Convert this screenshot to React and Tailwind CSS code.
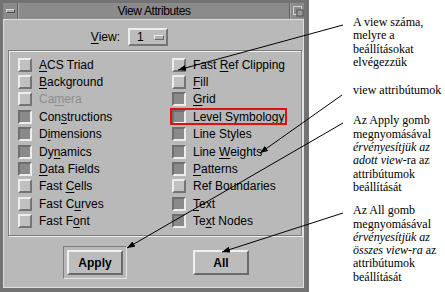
import React from "react";

const leftItems = [
    { label: "ACS Triad", u: 0, on: false },
    { label: "Background", u: 0, on: false },
    { label: "Camera", u: 2, on: false, disabled: true },
    { label: "Constructions", u: 3, on: true },
    { label: "Dimensions", u: 1, on: true },
    { label: "Dynamics", u: 2, on: true },
    { label: "Data Fields", u: 0, on: true },
    { label: "Fast Cells", u: 5, on: false },
    { label: "Fast Curves", u: 6, on: false },
    { label: "Fast Font", u: 6, on: false },
];

const rightItems = [
    { label: "Fast Ref Clipping", u: 5, on: false },
    { label: "Fill", u: 0, on: false },
    { label: "Grid", u: 0, on: true },
    { label: "Level Symbology", u: 0, on: true },
    { label: "Line Styles", u: -1, on: true },
    { label: "Line Weights", u: 5, on: true },
    { label: "Patterns", u: 0, on: true },
    { label: "Ref Boundaries", u: -1, on: false },
    { label: "Text", u: 0, on: true },
    { label: "Text Nodes", u: 2, on: true },
];

// Label with one underlined mnemonic letter
const Mnemonic = ({ text, u }) => {
    if (u < 0) return <span>{text}</span>;
    return (
        <span>
            {text.slice(0, u)}
            <span className="underline underline-offset-2">{text[u]}</span>
            {text.slice(u + 1)}
        </span>
    );
};

const CheckRow = ({ item }) => (
    <div className="flex items-center h-[17.4px]">
        <span
            className={`w-[14px] h-[14px] shrink-0 border-2 ${item.on
                ? "bg-[#8a8a8a] border-t-[#6e6e6e] border-l-[#6e6e6e] border-b-[#ededed] border-r-[#ededed]"
                : "bg-[#c0c0c0] border-t-[#ededed] border-l-[#ededed] border-b-[#747474] border-r-[#747474]"
                }`}
        />
        <span className={`ml-[7px] whitespace-nowrap ${item.disabled ? "text-[#8e8e8e]" : "text-black"}`}>
            <Mnemonic text={item.label} u={item.u} />
        </span>
    </div>
);

const Window = () => (
    <div className="w-[309px] h-[292px] shrink-0 flex flex-col bg-[#737373] pt-[3px] pl-[3px] pr-[5px] pb-[4px]">
        {/* Title bar */}
        <div className="flex h-[16px] bg-[#8b8b8b]">
            <div className="w-[15px] flex items-center justify-center border-r border-r-[#5e5e5e]">
                <span className="w-[9px] h-[4px] bg-[#a9a9a9] border border-t-[#dcdcdc] border-l-[#dcdcdc] border-b-[#505050] border-r-[#505050]" />
            </div>
            <div className="flex-1 flex items-center justify-center text-[12px] tracking-[-0.4px] text-black border-l border-l-[#a8a8a8] border-r border-r-[#5e5e5e]">
                View Attributes
            </div>
            <div className="w-[14px] flex items-center justify-center border-l border-l-[#a8a8a8]">
                <svg width="12" height="12" viewBox="0 0 12 12">
                    <rect x="1.5" y="1.5" width="8" height="8" fill="none" stroke="#d0d0d0" />
                    <rect x="5" y="5" width="6" height="6" fill="#9a9a9a" stroke="#4e4e4e" />
                </svg>
            </div>
        </div>

        {/* Client area */}
        <div className="flex-1 flex flex-col bg-[#b9b9b9] border border-[#dedede] pl-[4px]">
            {/* View selector */}
            <div className="flex items-center mt-[8px] h-[18px]">
                <span className="w-[112px] text-right text-[12px]">
                    <Mnemonic text="View:" u={0} />
                </span>
                <div className="ml-[8px] w-[40px] h-[18px] flex items-center border-2 border-t-[#ededed] border-l-[#ededed] border-b-[#747474] border-r-[#747474] bg-[#bcbcbc]">
                    <span className="ml-[7px] text-[12px]">1</span>
                    <span className="ml-auto mr-[2px] w-[10px] h-[5px] bg-[#b0b0b0] border border-t-[#ededed] border-l-[#ededed] border-b-[#6a6a6a] border-r-[#6a6a6a]" />
                </div>
            </div>

            {/* Attribute group */}
            <div className="mt-[4px] w-[294px] h-[186px] border border-[#7c7c7c] shadow-[inset_1px_1px_0_#ececec,1px_1px_0_#ececec] flex pt-[5px] pl-[9px] text-[12px]">
                <div className="flex flex-col w-[154px]">
                    {leftItems.map((item) => (
                        <CheckRow key={item.label} item={item} />
                    ))}
                </div>
                <div className="flex flex-col">
                    {rightItems.map((item) => (
                        <CheckRow key={item.label} item={item} />
                    ))}
                </div>
            </div>

            {/* Buttons */}
            <div className="flex items-start mt-[10px]">
                <div className="ml-[55px] p-[3px] border border-t-[#7c7c7c] border-l-[#7c7c7c] border-b-[#e6e6e6] border-r-[#e6e6e6]">
                    <button className="w-[56px] h-[25px] flex items-center justify-center bg-[#bcbcbc] border-2 border-t-[#f0f0f0] border-l-[#f0f0f0] border-b-[#6b6b6b] border-r-[#6b6b6b] text-[12px] font-bold">
                        Apply
                    </button>
                </div>
                <button className="ml-[66px] mt-[4px] w-[56px] h-[25px] flex items-center justify-center bg-[#bcbcbc] border-2 border-t-[#f0f0f0] border-l-[#f0f0f0] border-b-[#6b6b6b] border-r-[#6b6b6b] text-[12px] font-bold">
                    All
                </button>
            </div>
        </div>
    </div>
);

const Notes = () => (
    <div className="ml-[44px] flex flex-col text-[12px] leading-[13.3px] text-black whitespace-nowrap font-['Liberation_Serif',serif]">
        <div className="mt-[16px]">
            <div>A view száma,</div>
            <div>melyre a</div>
            <div>beállításokat</div>
            <div>elvégezzük</div>
        </div>
        <div className="mt-[15px]">view attribútumok</div>
        <div className="mt-[17px]">
            <div>Az Apply gomb</div>
            <div>megnyomásával</div>
            <div className="italic">érvényesítjük az</div>
            <div><span className="italic">adott view</span>-ra az</div>
            <div>attribútumok</div>
            <div>beállítását</div>
        </div>
        <div className="mt-[10px]">
            <div>Az All gomb</div>
            <div>megnyomásával</div>
            <div className="italic">érvényesítjük az</div>
            <div><span className="italic">összes view-ra</span> az</div>
            <div>attribútumok</div>
            <div>beállítását</div>
        </div>
    </div>
);

const Arrows = () => (
    <svg className="absolute inset-0 pointer-events-none" width="445" height="292" viewBox="0 0 445 292">
        <defs>
            <marker id="head" markerUnits="userSpaceOnUse" markerWidth="8" markerHeight="6" refX="8" refY="3" orient="auto">
                <path d="M0,0 L8,3 L0,6 z" fill="#000" />
            </marker>
        </defs>
        <g stroke="#000" strokeWidth="1" fill="none">
            <line x1="343" y1="25" x2="178" y2="70" markerEnd="url(#head)" />
            <line x1="342" y1="95" x2="260" y2="153" markerEnd="url(#head)" />
            <line x1="343" y1="123" x2="127" y2="248" markerEnd="url(#head)" />
            <line x1="343" y1="213" x2="222" y2="252" markerEnd="url(#head)" />
        </g>
        <rect x="171" y="109" width="115" height="15" fill="none" stroke="#e01010" strokeWidth="2" />
    </svg>
);

export default function App() {
    return (
        <div className="relative flex w-[445px] h-[292px] bg-white overflow-hidden font-['Liberation_Sans',Arial,sans-serif]">
            <Window />
            <Notes />
            <Arrows />
        </div>
    );
}
